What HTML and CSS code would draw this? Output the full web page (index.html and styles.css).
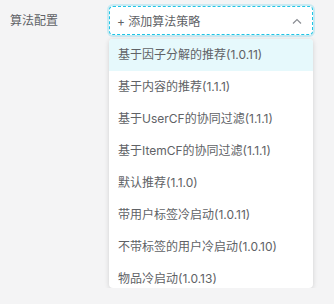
FILE: index.html
```html
<!DOCTYPE html>
<html>
<head>
<meta charset="utf-8">
<link rel="stylesheet" href="styles.css">
</head>
<body>
<div class="row">
  <div class="label">算法配置</div>
  <div class="field">
    <div class="select">
      <span class="placeholder">+ 添加算法策略</span>
      <svg class="arrow" width="10" height="6" viewBox="0 0 10 6"><path d="M1 5.5 L5 1.5 L9 5.5" fill="none" stroke="#8a8d93" stroke-width="1.2"/></svg>
    </div>
    <ul class="menu">
      <li class="item active">基于因子分解的推荐(1.0.11)</li>
      <li class="item">基于内容的推荐(1.1.1)</li>
      <li class="item">基于UserCF的协同过滤(1.1.1)</li>
      <li class="item">基于ItemCF的协同过滤(1.1.1)</li>
      <li class="item">默认推荐(1.1.0)</li>
      <li class="item">带用户标签冷启动(1.0.11)</li>
      <li class="item">不带标签的用户冷启动(1.0.10)</li>
      <li class="item">物品冷启动(1.0.13)</li>
    </ul>
  </div>
</div>
</body>
</html>
```
FILE: styles.css
```css
html, body {
  margin: 0;
  padding: 0;
  background: #f4f4f5;
  font-family: Inter, "Noto Sans CJK SC", sans-serif;
  font-size: 12px;
  color: #606266;
}
.row {
  display: flex;
  padding: 6px 0 0 10px;
}
.label {
  width: 99px;
  line-height: 30px;
  color: #606266;
}
.field {
  width: 204px;
  display: flex;
  flex-direction: column;
  gap: 4px;
}
.select {
  height: 29px;
  box-sizing: border-box;
  border: 1px dashed #1ec5e6;
  border-radius: 4px;
  box-shadow: 0 0 0 2px rgba(30, 197, 230, 0.2);
  background: #fff;
  display: flex;
  align-items: center;
  justify-content: space-between;
  padding: 0 10px 0 7px;
}
.placeholder {
  color: #606266;
}
.arrow {
  display: block;
}
.menu {
  list-style: none;
  margin: 0;
  padding: 0;
  height: 249px;
  overflow: hidden;
  background: #fff;
  border-radius: 4px;
  box-shadow: 0 1px 5px rgba(0, 0, 0, 0.15);
}
.item {
  height: 32px;
  line-height: 32px;
  padding: 0 9px;
  white-space: nowrap;
}
.item.active {
  background: #e6f9fc;
}
```
